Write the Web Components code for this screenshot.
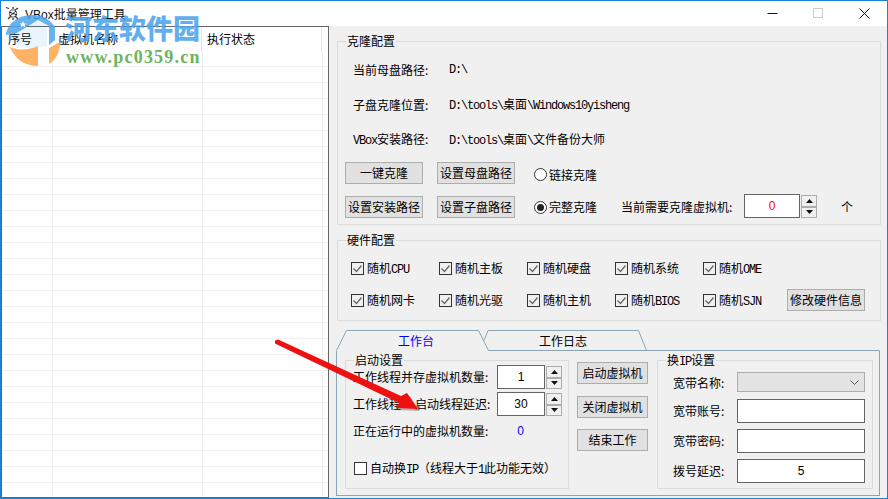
<!DOCTYPE html>
<html>
<head>
<meta charset="utf-8">
<title>VBox批量管理工具</title>
<style>
html, body { margin: 0; padding: 0; width: 888px; height: 499px; overflow: hidden; background: #f0f0f0; }
body { font: 12px/16px "Noto Sans CJK SC", "Liberation Sans", sans-serif; color: #000; }
</style>
</head>
<body>
<vb-window></vb-window>

<script>
const MONO = `.l{font:12px "Liberation Mono",monospace;letter-spacing:-1.2px;}`;

// small base class, every element just passes its css and markup
class Base extends HTMLElement {
    render(css, html) {
        this.attachShadow({mode: 'open'});
        this.shadowRoot.innerHTML = `<style>${css}</style>${html}`;
    }
}

class VbTitlebar extends Base {
    constructor() {
        super();
        this.render(`
:host{display:flex;align-items:center;height:25px;background:#fff;padding-left:4px;}
svg{display:block;flex:none;}
.name{margin-left:5px;font-size:12px;color:#111;}
.lat{font:12px "Liberation Sans",sans-serif;}
.btns{margin-left:auto;display:flex;}
.btns div{width:46px;height:25px;display:flex;align-items:center;justify-content:center;}
`, `
<svg width="15" height="15" viewBox="0 0 15 15" fill="none" stroke="#333" stroke-width="1.3">
  <circle cx="8" cy="7.5" r="3.6" stroke="#777"/>
  <path d="M1 1.5l3 1M13 2l-3 2M3 13l3-3M13 13l-3-3M8 1v2M8 12v2"/>
  <path d="M4 6l8 3M5 10l6-5" stroke="#222" stroke-width="1"/>
</svg>
<span class="name"><span class="lat">VBox</span>批量管理工具</span>
<div class="btns">
  <div><svg width="11" height="11"><path d="M.5 5.500h10" stroke="#111"/></svg></div>
  <div><svg width="11" height="11"><rect x=".5" y=".5" width="9" height="9" fill="none" stroke="#ccc"/></svg></div>
  <div><svg width="11" height="11"><path d="M.5 .5l10 10M10.500 .5l-10 10" stroke="#111"/></svg></div>
</div>`);
    }
}

class VbGrid extends Base {
    constructor() {
        super();
        this.render(`
:host{display:block;width:328px;background:#fff;border:1px solid #646464;box-sizing:border-box;overflow:hidden;}
.head{display:grid;grid-template-columns:50px 150px 120px;height:24px;}
.head div{padding-left:6px;line-height:24px;border-right:1px solid #e4e4e4;box-sizing:border-box;}
.head div:nth-child(1){border-right:0;}
.head div:nth-child(3){padding-left:5px;}
.body{height:450px;background:
  repeating-linear-gradient(to bottom,transparent 0,transparent 15px,#f0f0f0 15px,#f0f0f0 16px),
  linear-gradient(#f0f0f0,#f0f0f0) 50px 0/1px 100% no-repeat,
  linear-gradient(#f0f0f0,#f0f0f0) 200px 0/1px 100% no-repeat,
  linear-gradient(#f0f0f0,#f0f0f0) 320px 0/1px 100% no-repeat;}
`, `
<div class="head"><div>序号</div><div>虚拟机名称</div><div>执行状态</div></div>
<div class="body"></div>`);
    }
}

// fieldset look: border box with the caption sitting on the top line
class VbGroup extends Base {
    constructor() {
        super();
        this.render(`
:host{display:block;box-sizing:border-box;border:1px solid #dcdcdc;position:relative;}
.cap{position:absolute;left:8px;top:-9px;height:16px;line-height:16px;padding:0 1px;background:#f0f0f0;}
${MONO}
`, `<div class="cap"></div><slot></slot>`);
        const t = this.getAttribute('caption') || '';
        const cap = this.shadowRoot.querySelector('.cap');
        // latin bits go through the mono span
        cap.innerHTML = t.replace(/[A-Za-z]+/g, m => `<span class="l">${m}</span>`);
    }
}

class VbButton extends Base {
    constructor() {
        super();
        this.render(`
:host{display:flex;align-items:center;justify-content:center;box-sizing:border-box;width:78px;height:22px;background:#e1e1e1;border:1px solid #adadad;font-size:12px;white-space:nowrap;}
`, `<slot></slot>`);
    }
}

class VbRadio extends Base {
    constructor() {
        super();
        this.render(`
:host{display:flex;align-items:center;gap:2px;height:16px;}
i{display:flex;align-items:center;justify-content:center;width:13px;height:13px;box-sizing:border-box;border:1px solid #333;border-radius:50%;background:#fff;}
b{display:block;width:7px;height:7px;border-radius:50%;background:#222;}
`, `<i>${this.hasAttribute('checked') ? '<b></b>' : ''}</i><span><slot></slot></span>`);
    }
}

class VbCheck extends Base {
    constructor() {
        super();
        const on = !this.hasAttribute('off');
        this.render(`
:host{display:flex;align-items:center;gap:3px;height:16px;white-space:nowrap;}
svg{display:block;flex:none;}
`, `<svg width="13" height="13"><rect x=".5" y=".5" width="12" height="12" fill="${on ? 'none' : '#fff'}" stroke="#333"/>${on ? '<path d="M2.5 6.5l3 3 5-6" fill="none" stroke="#666" stroke-width="1.3"/>' : ''}</svg><span><slot></slot></span>`);
    }
}

class VbInput extends Base {
    constructor() {
        super();
        this.render(`
:host{display:flex;align-items:center;justify-content:center;box-sizing:border-box;background:#fff;border:1px solid #646464;font:12px "Liberation Sans",sans-serif;}
`, `<slot></slot>`);
    }
}

class VbSpin extends Base {
    constructor() {
        super();
        this.render(`
:host{display:flex;gap:1px;}
.box{display:flex;align-items:center;justify-content:center;box-sizing:border-box;width:var(--w,48px);height:24px;background:#fff;border:1px solid #646464;font:12px "Liberation Sans",sans-serif;color:var(--c,#000);}
.arrows{display:flex;flex-direction:column;width:16px;height:23px;margin-top:1px;}
.arrows div{flex:1;display:flex;align-items:center;justify-content:center;box-sizing:border-box;background:#f0f0f0;border:1px solid #adadad;}
`, `
<div class="box"><slot></slot></div>
<div class="arrows">
  <div><svg width="7" height="4"><path d="M3.5 0L7 4H0z" fill="#111"/></svg></div>
  <div><svg width="7" height="4"><path d="M0 0h7L3.5 4z" fill="#111"/></svg></div>
</div>`);
    }
}

class VbSelect extends Base {
    constructor() {
        super();
        this.render(`
:host{display:flex;align-items:center;justify-content:flex-end;box-sizing:border-box;background:#e3e3e3;border:1px solid #adadad;padding-right:5px;}
svg{display:block;}
`, `<svg width="9" height="5"><path d="M.5 .5l4 4 4-4" fill="none" stroke="#555"/></svg>`);
    }
}

class VbClonePanel extends Base {
    constructor() {
        super();
        this.render(`
:host{display:block;}
vb-group{height:184px;padding:10px 0 0 15px;}
.info{display:grid;grid-template-columns:96px auto;grid-auto-rows:35px;align-items:center;height:105px;}
${MONO}
.row{display:flex;align-items:center;height:22px;margin:5px 0 0 -8px;}
.row + .row{margin-top:12px;}
.row vb-button + vb-button{margin-left:14px;}
vb-radio{margin-left:19px;}
.first vb-radio{margin-top:3px;}
.need{margin-left:24px;width:123px;white-space:nowrap;}
.unit{margin-left:24px;}
vb-spin{--w:56px;--c:#f00;margin-top:-2px;}
`, `
<vb-group caption="克隆配置">
  <div class="info">
    <span>当前母盘路径:</span><span class="l">D:\\</span>
    <span>子盘克隆位置:</span><span><span class="l">D:\\tools\\</span>桌面<span class="l">\\Windows10yisheng</span></span>
    <span><span class="l">VBox</span>安装路径:</span><span><span class="l">D:\\tools\\</span>桌面<span class="l">\\</span>文件备份大师</span>
  </div>
  <div class="row first">
    <vb-button>一键克隆</vb-button><vb-button>设置母盘路径</vb-button><vb-radio>链接克隆</vb-radio>
  </div>
  <div class="row">
    <vb-button>设置安装路径</vb-button><vb-button>设置子盘路径</vb-button><vb-radio checked>完整克隆</vb-radio>
    <span class="need">当前需要克隆虚拟机:</span><vb-spin>0</vb-spin><span class="unit">个</span>
  </div>
</vb-group>`);
    }
}

class VbHardwarePanel extends Base {
    constructor() {
        super();
        this.render(`
:host{display:block;}
vb-group{height:81px;}
.wrap{display:grid;grid-template-columns:88px 88px 88px 88px 84px auto;grid-template-rows:16px 16px;row-gap:16px;padding:19px 0 0 13px;align-items:center;}
${MONO}
`, `
<vb-group caption="硬件配置">
  <div class="wrap">
    <vb-check>随机<span class="l">CPU</span></vb-check>
    <vb-check>随机主板</vb-check>
    <vb-check>随机硬盘</vb-check>
    <vb-check>随机系统</vb-check>
    <vb-check>随机<span class="l">OME</span></vb-check>
    <span></span>
    <vb-check>随机网卡</vb-check>
    <vb-check>随机光驱</vb-check>
    <vb-check>随机主机</vb-check>
    <vb-check>随机<span class="l">BIOS</span></vb-check>
    <vb-check>随机<span class="l">SJN</span></vb-check>
    <vb-button>修改硬件信息</vb-button>
  </div>
</vb-group>`);
    }
}

class VbTabs extends Base {
    constructor() {
        super();
        this.render(`
:host{display:block;width:544px;}
.strip{position:relative;display:flex;height:21px;}
.strip svg{position:absolute;left:0;top:0;}
.tab{position:relative;line-height:21px;}
.t1{margin-left:62px;color:#00f;}
.t2{margin-left:105px;}
.page{box-sizing:border-box;height:145px;border:1px solid #8aa4b4;border-top:0;padding:9px 7px 6px 8px;display:flex;}
`, `
<div class="strip">
  <svg width="544" height="21" fill="none" stroke="#8aa4b4">
    <path d="M.5 20.500L10.500 .5H142.500L152.500 20.500H543.500"/>
    <path d="M148 10.500L152 .5H302.500L310.500 20.500"/>
  </svg>
  <span class="tab t1">工作台</span><span class="tab t2">工作日志</span>
</div>
<div class="page"><slot></slot></div>`);
    }
}

class VbWorkPage extends Base {
    constructor() {
        super();
        this.render(`
:host{display:flex;}
.start{width:224px;height:129px;}
.rows{padding:4px 0 0 7px;}
.line{display:flex;align-items:center;height:24px;white-space:nowrap;}
.line + .line{margin-top:3px;}
.txt{width:144px;}
.gap{margin-left:14px;}
.running{margin-top:3px !important;}
.running b{font:normal 12px "Liberation Sans",sans-serif;color:#00f;margin-left:29px;}
vb-check{margin:17px 0 0 1px;}
${MONO}
.btns{display:flex;flex-direction:column;gap:12px;margin:2px 9px 0 8px;}
.btns vb-button{width:71px;}
.btns vb-button:last-child{margin-top:-1px;}
.ip{width:216px;height:129px;}
.form{display:grid;grid-template-columns:64px 128px;padding:11px 0 0 15px;align-items:center;}
.form span{white-space:nowrap;}
vb-select{height:20px;margin-bottom:7px;}
.form span.a{margin-bottom:5px;}
.form vb-input{height:24px;}
.form .m{margin-bottom:6px;}
`, `
<vb-group class="start" caption="启动设置">
  <div class="rows">
    <div class="line"><span class="txt">工作线程并存虚拟机数量:</span><vb-spin>1</vb-spin></div>
    <div class="line"><span class="txt">工作线程<span class="gap">启动线程延迟:</span></span><vb-spin>30</vb-spin></div>
    <div class="line running"><span>正在运行中的虚拟机数量:</span><b>0</b></div>
    <vb-check off>自动换<span class="l">IP</span>（线程大于<span class="l">1</span>此功能无效）</vb-check>
  </div>
</vb-group>
<div class="btns">
  <vb-button>启动虚拟机</vb-button>
  <vb-button>关闭虚拟机</vb-button>
  <vb-button>结束工作</vb-button>
</div>
<vb-group class="ip" caption="换IP设置">
  <div class="form">
    <span class="a">宽带名称:</span><vb-select></vb-select>
    <span class="m">宽带账号:</span><vb-input class="m"></vb-input>
    <span class="m">宽带密码:</span><vb-input class="m"></vb-input>
    <span>拨号延迟:</span><vb-input>5</vb-input>
  </div>
</vb-group>`);
    }
}

// watermark, lies over the grid and the titlebar
class VbWatermark extends Base {
    constructor() {
        super();
        this.render(`
:host{position:absolute;left:-1px;top:-1px;width:210px;height:72px;pointer-events:none;}
svg{position:absolute;left:0;top:0;}
.cn{position:absolute;left:65px;top:11px;font:900 27px/34px "Noto Sans CJK SC",serif;color:#4ca5ec;opacity:.88;white-space:nowrap;}
.url{position:absolute;left:66px;top:47px;font:bold 18px/20px "Liberation Serif",serif;letter-spacing:1.2px;color:#6cb55e;white-space:nowrap;}
`, `
<svg width="70" height="70" fill="none">
  <path d="M6 35C7 24 18 15 32 15C42 15 50 19 55 27V40L49 45V26L38 20L17 33Z" fill="#4ca5ec" opacity=".85"/>
  <path d="M6 35L17 33L38 20L47 25V46L38 47L28 48C18 47 10 44 6 35Z" fill="#4ca5ec" opacity=".12"/>
  <path d="M23 21l1 2.500h2.500l-2 1.500 1 2.500-2.500-1.500-2.500 1.500 1-2.500-2-1.500h2.500z" fill="#fff"/>
  <path d="M10 47C18 51 30 50 38 46L38 66C24 66 14 58 10 47Z" fill="#ffad5c" opacity=".95"/>
  <path d="M49 48L60 42C60 52 56 60 49 64Z" fill="#ffad5c" opacity=".95"/>
</svg>
<div class="cn">河东软件园</div>
<div class="url">www.pc0359.cn</div>`);
    }
}

class VbArrow extends Base {
    constructor() {
        super();
        this.render(`
:host{position:absolute;left:269px;top:334px;width:160px;height:85px;pointer-events:none;}
svg{display:block;}
`, `
<svg width="160" height="85" viewBox="270 335 160 85">
  <path d="M276 344L400 402L396 410L419 411L410 396L404 400Z" fill="#000" opacity=".25"/>
  <path d="M275 340.500L278 339.500L401 396L407 393L418 409L396 408L399 403L275 343.500Z" fill="#ee1111"/>
</svg>`);
    }
}

class VbWindow extends Base {
    constructor() {
        super();
        this.render(`
:host{display:flex;flex-direction:column;box-sizing:border-box;width:888px;height:499px;border:1px solid #1883d7;position:relative;background:#f0f0f0;}
.main{display:flex;height:472px;}
.side{flex:none;}
.right{padding:15px 0 0 8px;display:flex;flex-direction:column;}
.right > * {width:544px;}
vb-hardware-panel{margin-top:15px;}
vb-tabs{margin-top:9px;margin-left:-1px;}
vb-grid{height:472px;}
`, `
<vb-titlebar></vb-titlebar>
<div class="main">
  <vb-grid class="side"></vb-grid>
  <div class="right">
    <vb-clone-panel></vb-clone-panel>
    <vb-hardware-panel></vb-hardware-panel>
    <vb-tabs><vb-work-page></vb-work-page></vb-tabs>
  </div>
</div>
<vb-watermark></vb-watermark>
<vb-arrow></vb-arrow>`);
    }
}

customElements.define('vb-titlebar', VbTitlebar);
customElements.define('vb-grid', VbGrid);
customElements.define('vb-group', VbGroup);
customElements.define('vb-button', VbButton);
customElements.define('vb-radio', VbRadio);
customElements.define('vb-check', VbCheck);
customElements.define('vb-input', VbInput);
customElements.define('vb-spin', VbSpin);
customElements.define('vb-select', VbSelect);
customElements.define('vb-clone-panel', VbClonePanel);
customElements.define('vb-hardware-panel', VbHardwarePanel);
customElements.define('vb-tabs', VbTabs);
customElements.define('vb-work-page', VbWorkPage);
customElements.define('vb-watermark', VbWatermark);
customElements.define('vb-arrow', VbArrow);
customElements.define('vb-window', VbWindow);
</script>
</body>
</html>
